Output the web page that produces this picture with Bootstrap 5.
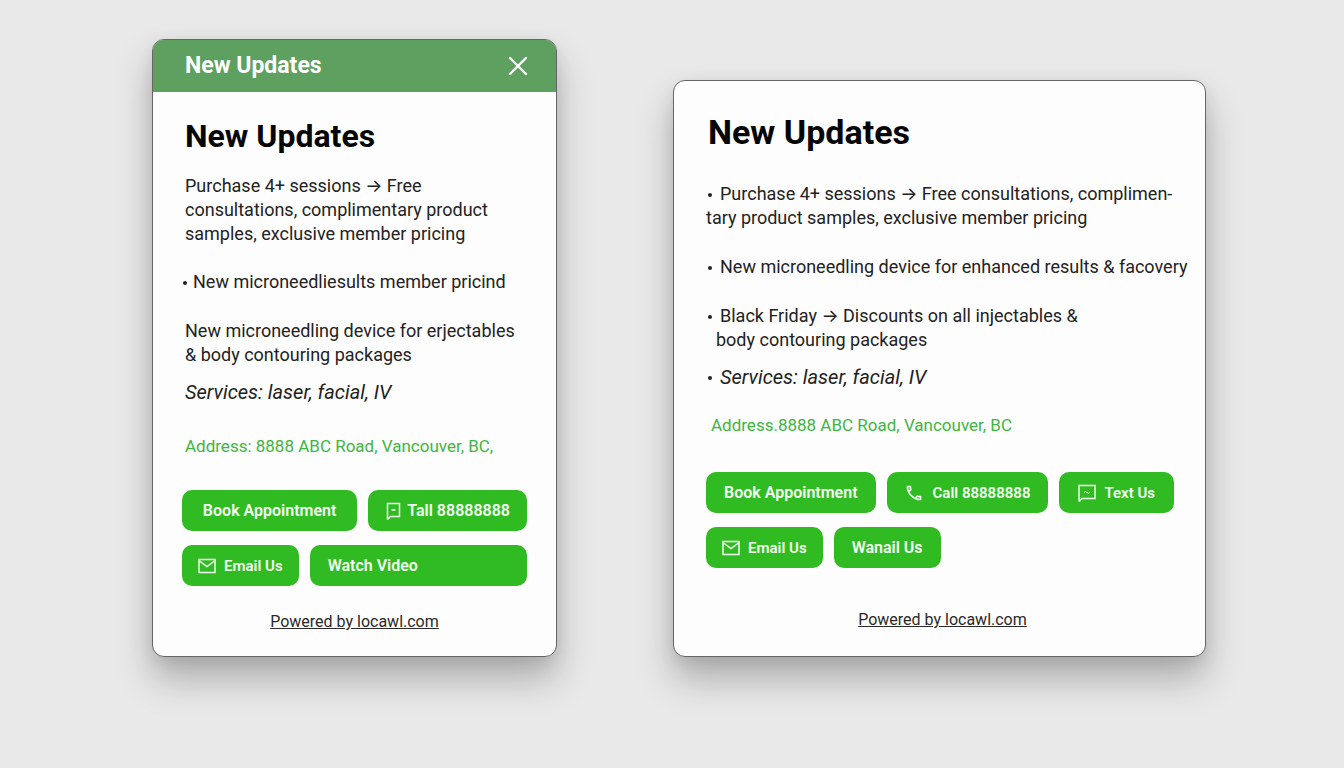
<!DOCTYPE html>
<html lang="en">
<head>
<meta charset="utf-8">
<meta name="viewport" content="width=device-width, initial-scale=1">
<title>New Updates</title>
<link rel="stylesheet" href="https://cdn.jsdelivr.net/npm/bootstrap@5.3.0/dist/css/bootstrap.min.css">
<style>
  body { background: #e9e9e9; color: #222; font-family: Roboto, "Liberation Sans", sans-serif; font-size: 18px; line-height: 24px; }
  .board { display: grid; grid-template-columns: 405fr 533fr; column-gap: 116px; align-items: end; padding: 39px 138px 72px 152px; }
  .panel { --bs-card-border-color: #666; --bs-card-border-radius: 12px; --bs-card-inner-border-radius: 11px; --bs-card-bg: #fdfdfd; box-shadow: 0 22px 36px rgba(0, 0, 0, .26), 0 4px 16px rgba(0, 0, 0, .08); color: inherit; }
  .panel-top { background: #5da05f; color: #fff; height: 52px; padding: 0 28px 0 32px; border-radius: 11px 11px 0 0; }
  .panel-top h2 { font-size: 23px; line-height: 28px; font-weight: 700; }
  .close-x { width: 20px; height: 20px; }
  .title { color: #050505; font-weight: 700; line-height: 40px; }
  .narrow .title { font-size: 32px; margin-bottom: 18px; }
  .wide .title { font-size: 34px; margin-bottom: 30px; }
  .narrow .card-body { padding: 24px 29px 22px; }
  .wide .card-body { padding: 31px 14px 24px 32px; }
  .narrow .copy { padding-left: 3px; }
  .wide .copy { padding-left: 2px; }
  .copy p { margin-bottom: 24px; }
  .copy li { margin-bottom: 25px; }
  .wide .copy li:last-child { margin-bottom: 23px; }
  .copy .tight { margin-bottom: 13px; }
  .copy em { font-size: 20px; }
  .arrow { font-family: Inter, sans-serif; }
  .dots { list-style: none; padding: 0; margin: 0; }
  .dots li { position: relative; padding-left: 12px; }
  .dots li::before { content: ""; position: absolute; left: 0; top: 11px; width: 4px; height: 4px; border-radius: 50%; background: currentColor; }
  .narrow .dots li { padding-left: 8px; }
  .narrow .dots li::before { left: -2px; }
  .back { margin-left: -14px; }
  .back-half { margin-left: -4px; }
  .address { color: #40b53f; font-size: 17px; }
  .narrow .address { margin: 29px 0 32px 3px; }
  .wide .address { margin: 0 0 35px 5px; }
  .actions { display: flex; flex-wrap: wrap; gap: 14px 11px; }
  .wide .actions { padding-right: 10px; }
  .btn-go { --bs-btn-bg: #31bb23; --bs-btn-color: #f1fff0; --bs-btn-hover-bg: #2aa61e; --bs-btn-hover-color: #fff; --bs-btn-active-bg: #259519; --bs-btn-active-color: #fff; --bs-btn-border-width: 0; --bs-btn-border-radius: 10px; --bs-btn-font-weight: 600; --bs-btn-font-size: 16px; --bs-btn-line-height: 24px; --bs-btn-padding-y: 0; --bs-btn-padding-x: 18px; height: 41px; display: inline-flex; align-items: center; white-space: nowrap; }
  .btn-small { --bs-btn-font-size: 15px; --bs-btn-padding-x: 16px; }
  .btn-call { --bs-btn-padding-x: 18px; gap: 10px; }
  .btn-chat { --bs-btn-padding-x: 19px; }
  .btn-tall { --bs-btn-padding-x: 17px; }
  .btn-go svg { width: 18px; height: 18px; flex: none; fill: none; stroke: currentColor; stroke-width: 1.5; }
  .btn-go svg.solid { fill: currentColor; stroke: none; }
  .powered { color: #2a2a2a; font-size: 16px; text-decoration: underline; }
  .narrow .foot { margin-top: 23px; }
  .wide .foot { margin-top: 39px; padding-right: 12px; }
  @media (max-width: 1200px) {
    .board { grid-template-columns: minmax(0, 540px); justify-content: center; row-gap: 48px; padding: 32px 16px; }
  }
</style>
</head>
<body>
<main class="board">
  <section class="card panel narrow">
    <header class="panel-top d-flex align-items-center justify-content-between">
      <h2 class="m-0">New Updates</h2>
      <button type="button" class="btn p-0 border-0 d-flex text-white" aria-label="Close">
        <svg class="close-x" viewBox="0 0 20 20" fill="none" stroke="currentColor" stroke-width="2.4" stroke-linecap="round"><path d="M2 2 18 18M18 2 2 18"/></svg>
      </button>
    </header>
    <div class="card-body">
      <div class="copy">
        <h1 class="title">New Updates</h1>
        <p>Purchase 4+ sessions <span class="arrow">→</span> Free<br>consultations, complimentary product<br>samples, exclusive member pricing</p>
        <ul class="dots"><li>New microneedliesults member pricind</li></ul>
        <p class="tight">New microneedling device for erjectables<br>&amp; body contouring packages</p>
        <p class="mb-0"><em>Services: laser, facial, IV</em></p>
      </div>
      <p class="address">Address: 8888 ABC Road, Vancouver, BC,</p>
      <div class="actions">
        <button type="button" class="btn btn-go flex-grow-1 justify-content-center">Book Appointment</button>
        <button type="button" class="btn btn-go btn-tall gap-1">
          <svg viewBox="0 0 18 18"><path d="M2.500 17.500V1.500h12v13h-9L2.500 17.500M6.500 8h4"/></svg>Tall 88888888
        </button>
        <button type="button" class="btn btn-go btn-small gap-2">
          <svg viewBox="0 0 18 18"><path d="M1 2.500h16v13H1zM1.500 4 9 9.500 16.500 4"/></svg>Email Us
        </button>
        <button type="button" class="btn btn-go flex-grow-1">Watch Video</button>
      </div>
      <div class="foot text-center"><a class="powered" href="#">Powered by locawl.com</a></div>
    </div>
  </section>

  <section class="card panel wide">
    <div class="card-body">
      <div class="copy">
        <h1 class="title">New Updates</h1>
        <ul class="dots">
          <li>Purchase 4+ sessions <span class="arrow">→</span> Free consultations, complimen-<br><span class="back">tary product samples, exclusive member pricing</span></li>
          <li>New microneedling device for enhanced results &amp; facovery</li>
          <li class="tight">Black Friday <span class="arrow">→</span> Discounts on all injectables &amp;<br><span class="back-half">body contouring packages</span></li>
          <li><em>Services: laser, facial, IV</em></li>
        </ul>
      </div>
      <p class="address">Address.8888 ABC Road, Vancouver, BC</p>
      <div class="actions">
        <button type="button" class="btn btn-go">Book Appointment</button>
        <button type="button" class="btn btn-go btn-small btn-call">
          <svg class="solid" viewBox="1 1 22 22"><path d="M6.540 5c.06.890.210 1.760.450 2.590l-1.200 1.200c-.410-1.200-.670-2.470-.760-3.790h1.510m9.860 12.020c.850.240 1.720.390 2.600.450v1.490c-1.320-.090-2.590-.350-3.800-.750l1.200-1.190M7.500 3H4c-.550 0-1 .450-1 1 0 9.390 7.610 17 17 17 .550 0 1-.450 1-1v-3.490c0-.550-.450-1-1-1-1.240 0-2.450-.200-3.570-.570-.100-.040-.210-.050-.310-.050-.260 0-.510.100-.710.290l-2.200 2.200c-2.830-1.450-5.150-3.760-6.590-6.590l2.200-2.200c.280-.280.360-.670.250-1.020C8.700 6.450 8.500 5.250 8.500 4c0-.550-.450-1-1-1z"/></svg>Call 88888888
        </button>
        <button type="button" class="btn btn-go btn-small btn-chat gap-2">
          <svg viewBox="0 0 18 18"><path d="M1 17.500V1.500h16v13H4L1 17.500"/><path d="M6 8.500q1.500-2 3 0t3-.500" stroke-width="1"/></svg>Text Us
        </button>
        <button type="button" class="btn btn-go btn-small gap-2">
          <svg viewBox="0 0 18 18"><path d="M1 2.500h16v13H1zM1.500 4 9 9.500 16.500 4"/></svg>Email Us
        </button>
        <button type="button" class="btn btn-go">Wanail Us</button>
      </div>
      <div class="foot text-center"><a class="powered" href="#">Powered by locawl.com</a></div>
    </div>
  </section>
</main>
<script src="https://cdn.jsdelivr.net/npm/bootstrap@5.3.0/dist/js/bootstrap.bundle.min.js"></script>
</body>
</html>
